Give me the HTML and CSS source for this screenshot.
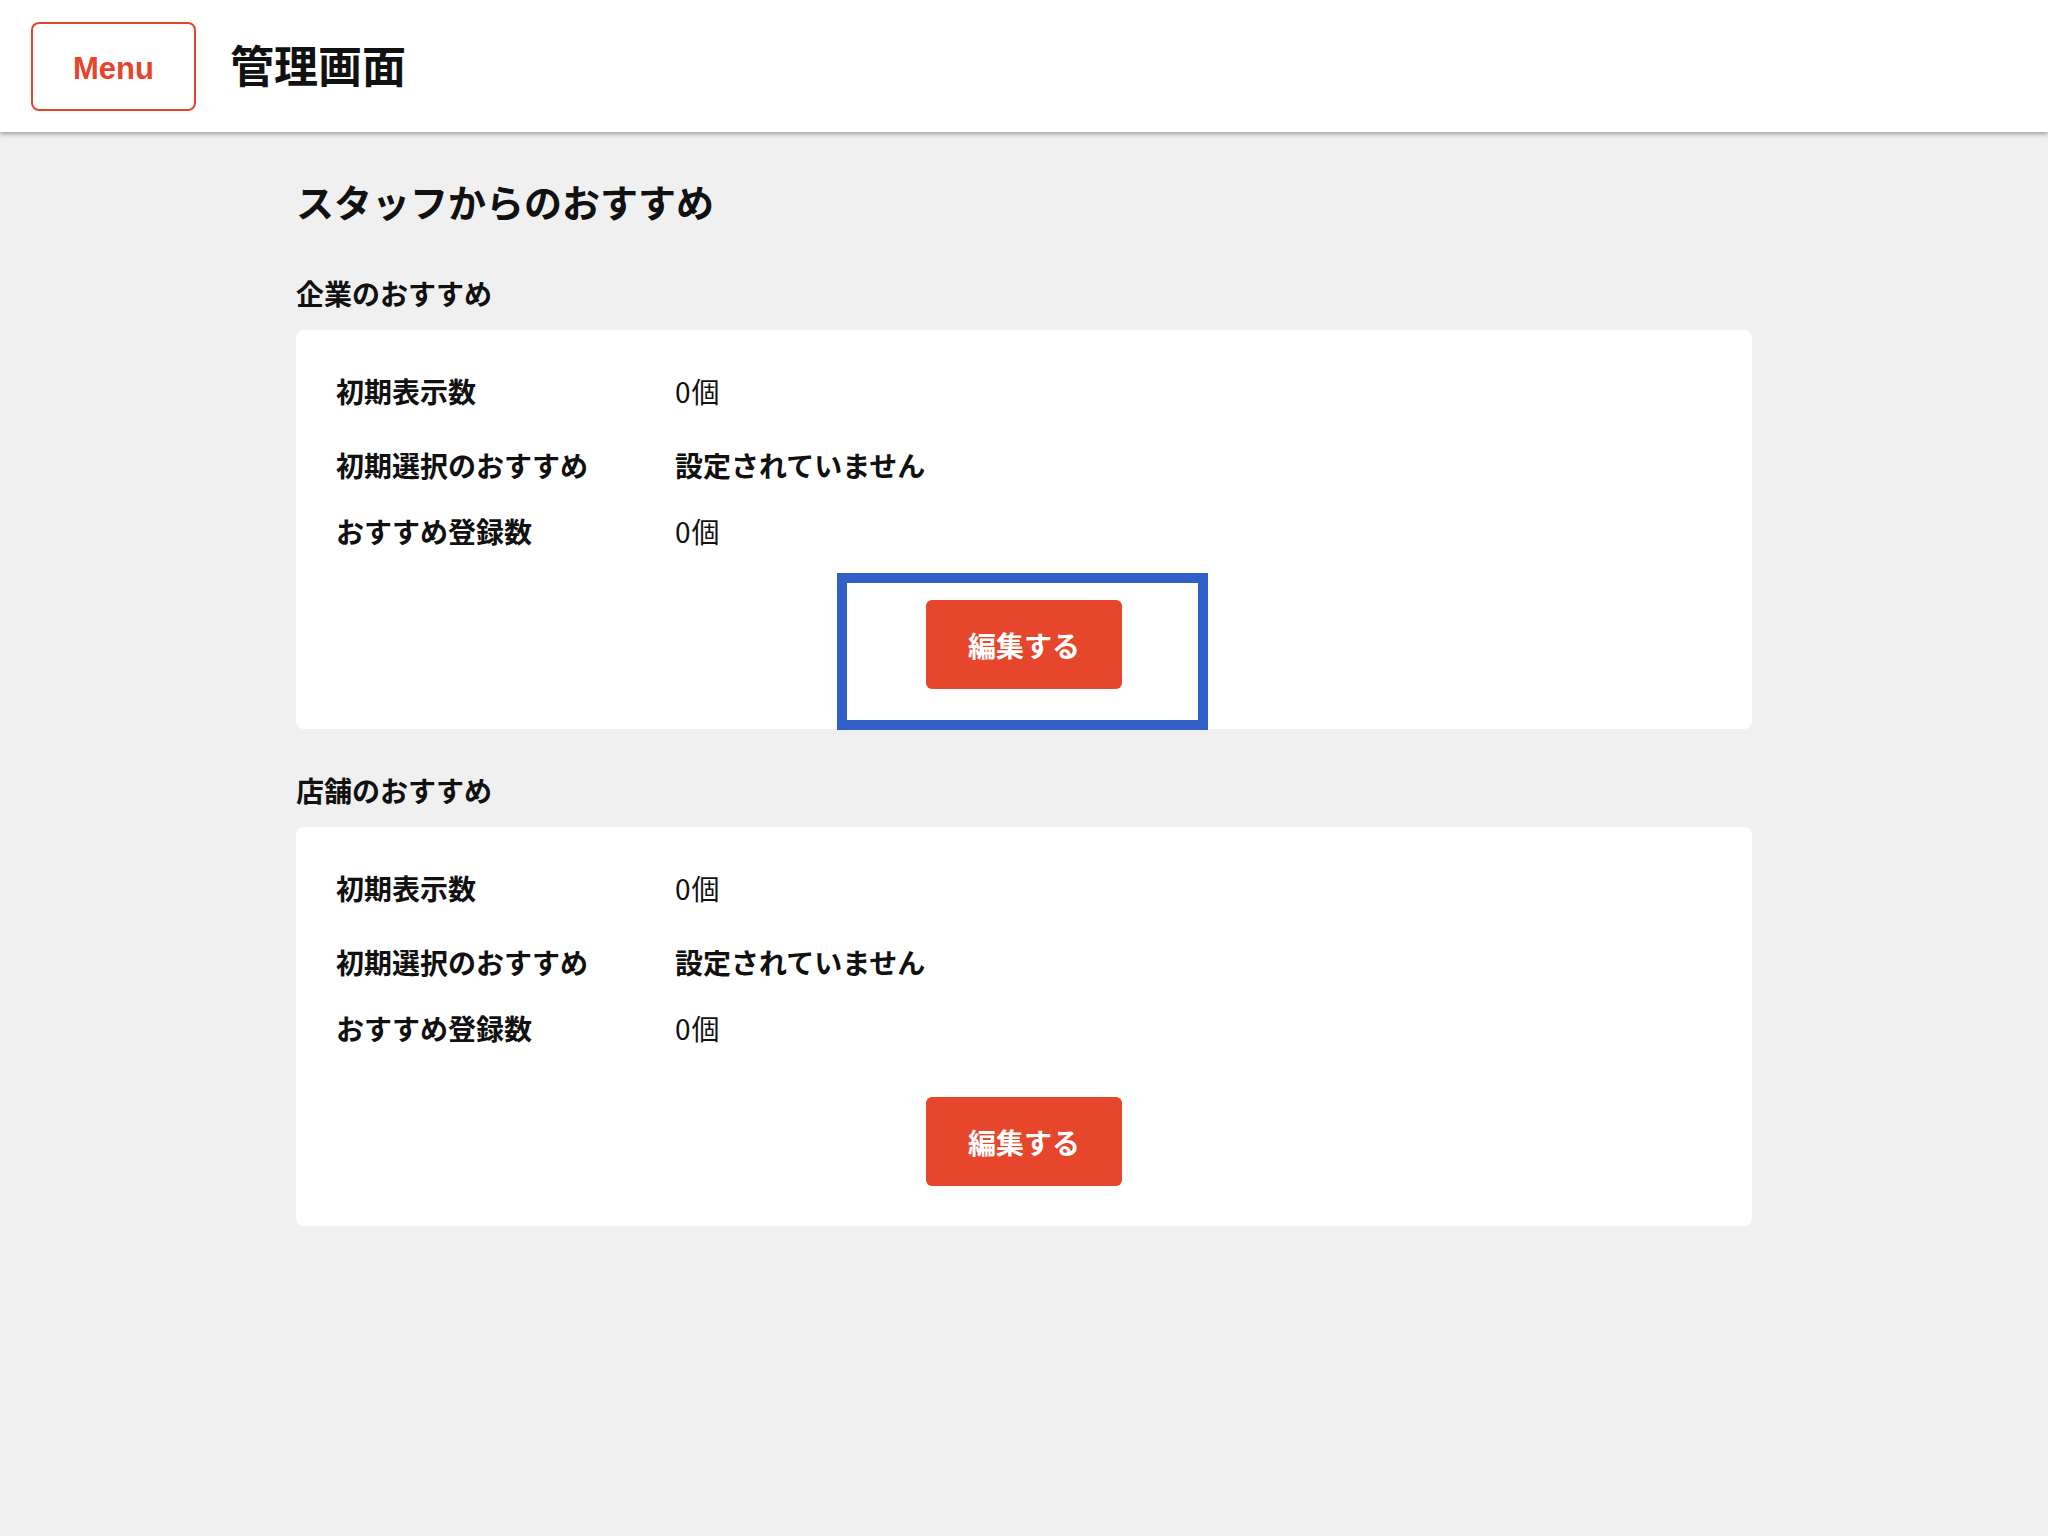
FILE: index.html
```html
<!DOCTYPE html>
<html lang="ja">
<head>
    <meta charset="UTF-8">
    <meta name="viewport" content="width=device-width, initial-scale=1.0">
    <title>管理画面</title>
    <link rel="stylesheet" href="styles.css">
</head>
<body>
    <header class="header">
        <button class="menu-btn">Menu</button>
        <h1 class="header-title">管理画面</h1>
    </header>

    <main class="main">
        <h2 class="page-title">スタッフからのおすすめ</h2>

        <h3 class="section-title">企業のおすすめ</h3>
        <div class="card">
            <dl class="info">
                <dt>初期表示数</dt><dd>0個</dd>
                <dt>初期選択のおすすめ</dt><dd class="strong">設定されていません</dd>
                <dt>おすすめ登録数</dt><dd>0個</dd>
            </dl>
            <div class="actions">
                <div class="btn-wrap">
                    <button class="edit-btn">編集する</button>
                    <span class="highlight"></span>
                </div>
            </div>
        </div>

        <h3 class="section-title">店舗のおすすめ</h3>
        <div class="card">
            <dl class="info">
                <dt>初期表示数</dt><dd>0個</dd>
                <dt>初期選択のおすすめ</dt><dd class="strong">設定されていません</dd>
                <dt>おすすめ登録数</dt><dd>0個</dd>
            </dl>
            <div class="actions">
                <div class="btn-wrap">
                    <button class="edit-btn">編集する</button>
                </div>
            </div>
        </div>
    </main>
</body>
</html>
```

FILE: styles.css
```css
*{box-sizing: border-box;}
body{margin: 0; background: #f0f0f0; color: #111; font-family: "Noto Sans CJK JP", "Noto Sans", sans-serif;}

.header{display: flex; align-items: center; height: 132px; padding-left: 31px; background: #fff; box-shadow: 0 2px 5px rgba(0,0,0,0.35); position: relative;}
.menu-btn{width: 165px; height: 89px; border: 2px solid #e5452b; border-radius: 8px; background: #fff; color: #e5452b; font-family: "Liberation Sans", Arial, sans-serif; font-weight: bold; font-size: 31px; padding: 5px 0 0; cursor: pointer;}
.header-title{margin: 0 0 5px 34px; font-size: 44px; font-weight: 700; line-height: 1;}

.main{width: 1456px; margin: 0 auto; padding-top: 40px;}
.page-title{margin: 0 0 43px; font-size: 38px; font-weight: 700; line-height: 57px;}
.section-title{margin: 0 0 16px; font-size: 28px; font-weight: 700; line-height: 42px;}

.card{background: #fff; border-radius: 8px; padding: 40px; margin-bottom: 40px;}

.info{display: grid; grid-template-columns: 339px 1fr; margin: 0; font-size: 28px; line-height: 42px;}
.info dt{font-weight: 700;}
.info dd{margin: 0; font-weight: 400; letter-spacing: 1px;}
.info dd.strong{font-weight: 700; letter-spacing: 0;}
.info dt:nth-of-type(2), .info dd:nth-of-type(2){margin-top: 32px;}
.info dt:nth-of-type(3), .info dd:nth-of-type(3){margin-top: 24px;}

.actions{display: flex; justify-content: center; margin-top: 48px;}
.btn-wrap{position: relative;}
.edit-btn{display: block; width: 196px; height: 89px; border: none; border-radius: 6px; background: #e5462c; color: #fff; font-family: "Noto Sans CJK JP", sans-serif; font-size: 28px; font-weight: 700; cursor: pointer;}
.highlight{position: absolute; left: -89px; right: -86px; top: -27px; bottom: -41px; border: 10px solid #3060c8; pointer-events: none;}
```
